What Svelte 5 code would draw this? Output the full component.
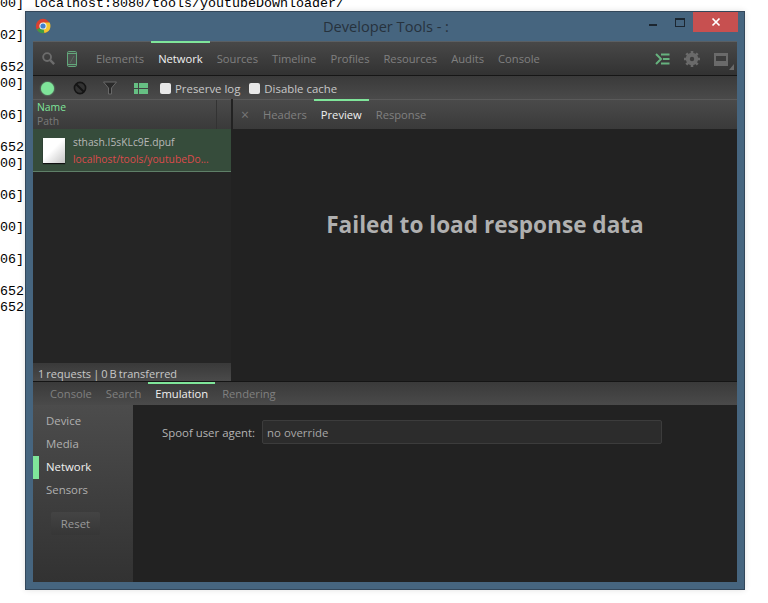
<script>
    const logLines = [
        '00] localhost:8080/tools/youtubeDownloader/', '', '02]', '', '652', '00]', '', '06]', '', '652', '00]', '', '06]', '', '00]', '', '06]', '', '652', '652'
    ];
    const mainTabs = ['Elements', 'Network', 'Sources', 'Timeline', 'Profiles', 'Resources', 'Audits', 'Console'];
    const previewTabs = ['Headers', 'Preview', 'Response'];
    const drawerTabs = ['Console', 'Search', 'Emulation', 'Rendering'];
    const sections = ['Device', 'Media', 'Network', 'Sensors'];
</script>

<div class="desktop">
    <pre class="log">{logLines.join('\n')}</pre>

    <div class="window">
        <div class="titlebar">
            <svg class="chrome" width="16" height="16" viewBox="0 0 16 16">
                <circle cx="8" cy="8" r="7.2" fill="#d9402f" />
                <path d="M8 8 L1.8 11.6 A7.2 7.2 0 0 0 9.6 15 Z" fill="#3f9b45" />
                <path d="M8 4.6 H14.6 A7.2 7.2 0 0 1 9.4 15.1 L8 8 Z" fill="#f2c531" />
                <circle cx="8" cy="8" r="3.6" fill="#eef3f7" />
                <circle cx="8" cy="8" r="2.6" fill="#3f7fd0" />
            </svg>
            <span class="title">Developer Tools - :</span>
            <div class="controls">
                <span class="min"></span>
                <span class="max"></span>
                <span class="close">
                    <svg width="10" height="10" viewBox="0 0 10 10"><path d="M1.5 1.5 L8.5 8.5 M8.5 1.5 L1.5 8.5" stroke="#fff" stroke-width="1.7" /></svg>
                </span>
            </div>
        </div>

        <div class="devtools">
            <div class="maintabs">
                <svg class="search" width="15" height="15" viewBox="0 0 16 16">
                    <circle cx="6.5" cy="6.5" r="4.2" fill="none" stroke="#6c6c6c" stroke-width="2" />
                    <path d="M9.8 9.8 L14 14" stroke="#6c6c6c" stroke-width="2.6" />
                </svg>
                <svg class="device" width="10" height="16" viewBox="0 0 10 16">
                    <rect x="0.5" y="0.5" width="9" height="15" rx="1.2" fill="#4a4f4c" stroke="#62a67a" />
                    <path d="M0.5 2.5 H9.5 M0.5 13.5 H9.5" stroke="#62a67a" />
                    <path d="M3 12 L7 5" stroke="#5a6a60" />
                </svg>
                {#each mainTabs as tab}
                    <span class="tab" class:active={tab === 'Network'}>{tab}</span>
                {/each}
                <div class="right-icons">
                    <svg width="15" height="12" viewBox="0 0 15 12">
                        <path d="M1 1 L6 6 L1 11" fill="none" stroke="#66b27e" stroke-width="2" />
                        <path d="M6 1.5 H14.5 M8 6 H14.5 M6 10.5 H14.5" stroke="#66b27e" stroke-width="2" />
                    </svg>
                    <svg class="gear" width="16" height="16" viewBox="0 0 16 16">
                        <circle cx="8" cy="8" r="4.5" fill="none" stroke="#6a6a6a" stroke-width="3.4" />
                        <path d="M8 0 V16 M0 8 H16 M2.3 2.3 L13.7 13.7 M13.7 2.3 L2.3 13.7" stroke="#6a6a6a" stroke-width="2.6" />
                        <circle cx="8" cy="8" r="2.2" fill="#3d3d3d" />
                    </svg>
                    <svg class="dock" width="20" height="17" viewBox="0 0 20 17">
                        <rect x="0" y="0" width="14" height="13" fill="#6a6a6a" />
                        <rect x="2" y="3" width="10" height="5" fill="#3c3c3c" />
                        <path d="M15 17 L20 17 L20 11 Z" fill="#6a6a6a" />
                    </svg>
                </div>
            </div>

            <div class="toolbar">
                <span class="record"></span>
                <svg class="clear" width="14" height="14" viewBox="0 0 14 14">
                    <circle cx="7" cy="7" r="5.6" fill="#333" stroke="#151515" stroke-width="1.6" />
                    <path d="M3 3 L11 11" stroke="#151515" stroke-width="2" />
                </svg>
                <svg class="filter" width="14" height="14" viewBox="0 0 14 14">
                    <path d="M0.5 1 H13.5 L8.5 7 V13 H5.5 V7 Z" fill="#2a2a2a" stroke="#686868" />
                </svg>
                <svg class="rows" width="14" height="11" viewBox="0 0 14 11">
                    <path d="M0 0 H4 V5 H0 Z M5 0 H14 V5 H5 Z M0 6 H4 V11 H0 Z M5 6 H14 V11 H5 Z" fill="#66bf83" />
                </svg>
                <label class="check"><input type="checkbox" />Preserve log</label>
                <label class="check"><input type="checkbox" />Disable cache</label>
            </div>

            <div class="split">
                <div class="requests">
                    <div class="list-head">
                        <div class="head-cell">
                            <span class="name-col">Name</span>
                            <span class="path-col">Path</span>
                        </div>
                    </div>
                    <div class="request">
                        <span class="file-icon"></span>
                        <div class="request-text">
                            <span class="file">sthash.I5sKLc9E.dpuf</span>
                            <span class="url">localhost/tools/youtubeDo...</span>
                        </div>
                    </div>
                    <div class="list-empty"></div>
                    <div class="status">1 requests | 0 B transferred</div>
                </div>
                <div class="preview">
                    <div class="preview-tabs">
                        <span class="x">×</span>
                        {#each previewTabs as tab}
                            <span class="tab" class:active={tab === 'Preview'}>{tab}</span>
                        {/each}
                    </div>
                    <div class="message">Failed to load response data</div>
                </div>
            </div>

            <div class="drawer">
                <div class="drawer-tabs">
                    {#each drawerTabs as tab}
                        <span class="tab" class:active={tab === 'Emulation'}>{tab}</span>
                    {/each}
                </div>
                <div class="drawer-body">
                    <div class="sidebar">
                        {#each sections as section}
                            <div class="section" class:selected={section === 'Network'}>{section}</div>
                        {/each}
                        <button class="reset">Reset</button>
                    </div>
                    <div class="settings">
                        <span class="spoof">Spoof user agent:</span>
                        <div class="agent">no override</div>
                    </div>
                </div>
            </div>
        </div>
    </div>
</div>

<style>
    :global(body) {
        background: #fff;
    }

    .desktop {
        position: relative;
        height: 603px;
        overflow: hidden;
        font-family: "Open Sans", "Noto Sans", sans-serif;
        font-size: 11.4px;
    }

    .log {
        margin: -4px 0 0;
        font-family: "Liberation Mono", monospace;
        font-size: 13.33px;
        line-height: 16px;
        color: #000;
    }

    .window {
        position: absolute;
        left: 25px;
        top: 11px;
        width: 720px;
        height: 579px;
        box-sizing: border-box;
        padding: 0 7px 7px;
        display: flex;
        flex-direction: column;
        background: #46657f;
        border: 1px solid #33475a;
        box-shadow: 0 0 6px rgba(0, 0, 0, 0.12);
    }

    .titlebar {
        position: relative;
        height: 29px;
        flex: none;
    }

    .chrome {
        position: absolute;
        left: 2px;
        top: 6px;
    }

    .title {
        display: block;
        padding-left: 290px;
        line-height: 29px;
        font-size: 14.6px;
        color: #26323d;
    }

    .controls {
        position: absolute;
        top: 0;
        right: -1px;
        display: flex;
        align-items: flex-start;
    }

    .min {
        width: 8px;
        height: 2px;
        margin: 12px 18px 0 0;
        background: #1c2630;
    }

    .max {
        width: 8px;
        height: 6px;
        margin: 6px 8px 0 0;
        border: 1px solid #1c2630;
        border-top-width: 2px;
    }

    .close {
        width: 45px;
        height: 20px;
        display: flex;
        align-items: center;
        justify-content: center;
        background: #c75050;
    }

    .devtools {
        flex: 1;
        min-height: 0;
        display: flex;
        flex-direction: column;
        background: #222;
        border-top: 1px solid #5a5f63;
    }

    .maintabs {
        height: 34px;
        flex: none;
        display: flex;
        align-items: center;
        box-sizing: border-box;
        padding-left: 8px;
        background: linear-gradient(#484848, #323232);
        border-bottom: 1px solid #161616;
    }

    .search {
        margin-right: 11px;
    }

    .device {
        margin-right: 12px;
    }

    .tab {
        position: relative;
        display: flex;
        align-items: center;
        align-self: stretch;
        padding: 0 7px;
        font-size: 11.2px;
        color: #808080;
    }

    .tab.active {
        color: #f0f0f0;
    }

    .tab.active::before {
        content: "";
        position: absolute;
        left: 0;
        right: 0;
        top: 0;
        height: 2px;
        background: #7fe59a;
    }

    .maintabs .tab.active::before {
        top: -1px;
    }

    .preview-tabs .tab.active::before {
        top: -1px;
    }

    .right-icons {
        margin-left: auto;
        display: flex;
        align-items: center;
        gap: 14px;
        padding-right: 3px;
    }

    .dock {
        margin-top: 6px;
    }

    .toolbar {
        height: 23px;
        flex: none;
        display: flex;
        align-items: center;
        background: linear-gradient(#3a3a3a, #4a4a4a);
        padding-left: 8px;
        padding-top: 1px;
        box-sizing: border-box;
    }

    .record {
        width: 13px;
        height: 13px;
        border-radius: 50%;
        background: #7fe59a;
        box-shadow: 0 0 2px #7fe59a;
    }

    .clear {
        margin-left: 19px;
    }

    .filter {
        margin-left: 16px;
    }

    .rows {
        margin-left: 17px;
    }

    .check {
        display: flex;
        align-items: center;
        margin-left: 9px;
        color: #c8c8c8;
    }

    .check input {
        appearance: none;
        width: 11px;
        height: 11px;
        margin: 0 4px 0 0;
        background: #e8e8e8;
        border-radius: 2px;
    }

    .rows + .check {
        margin-left: 12px;
    }

    .split {
        flex: 1;
        min-height: 0;
        display: flex;
    }

    .requests {
        width: 198px;
        flex: none;
        display: flex;
        flex-direction: column;
        margin-right: 2px;
        background: #252525;
    }

    .list-head {
        height: 30px;
        flex: none;
        box-sizing: border-box;
        background: linear-gradient(#4a4a4a, #3a3a3a);
        border-top: 1px solid #5a5a5a;
        padding-right: 14px;
    }

    .head-cell {
        height: 100%;
        display: flex;
        flex-direction: column;
        padding-left: 4px;
        box-sizing: border-box;
        line-height: 14px;
        font-size: 10.4px;
        border-right: 1px solid #333;
    }

    .name-col {
        color: #7fe59a;
    }

    .path-col {
        color: #7a7a7a;
    }

    .request {
        height: 43px;
        flex: none;
        box-sizing: border-box;
        display: flex;
        align-items: center;
        padding-left: 10px;
        background: #364c3b;
        border-bottom: 1px solid #5f7f68;
    }

    .file-icon {
        width: 22px;
        height: 25px;
        margin-right: 8px;
        background: linear-gradient(135deg, #fff 45%, #c4c4c4);
        box-shadow: 0 1px 1px #111;
    }

    .request-text {
        display: flex;
        flex-direction: column;
        gap: 3px;
        font-size: 10.3px;
        line-height: 14px;
    }

    .file {
        color: #b8b8b8;
    }

    .url {
        color: #db4b4b;
    }

    .list-empty {
        flex: 1;
        border-bottom: 1px solid #3a3a3a;
    }

    .status {
        height: 17px;
        flex: none;
        box-sizing: border-box;
        padding-left: 5px;
        line-height: 19px;
        font-size: 11px;
        word-spacing: -0.8px;
        color: #c8c8c8;
        background: linear-gradient(#3a3a3a, #4a4a4a);
    }

    .preview {
        flex: 1;
        display: flex;
        flex-direction: column;
        background: #222;
    }

    .preview-tabs {
        height: 30px;
        flex: none;
        box-sizing: border-box;
        display: flex;
        align-items: center;
        padding-left: 8px;
        background: linear-gradient(#4a4a4a, #3a3a3a);
        border-top: 1px solid #5a5a5a;
    }

    .x {
        color: #777;
        font-size: 14px;
        margin-right: 7px;
    }

    .message {
        padding-top: 80px;
        text-align: center;
        font-size: 22.6px;
        font-weight: 700;
        color: #b0b0b0;
    }

    .drawer {
        height: 201px;
        flex: none;
        display: flex;
        flex-direction: column;
        border-top: 1px solid #151515;
        box-sizing: border-box;
    }

    .drawer-tabs {
        height: 23px;
        flex: none;
        display: flex;
        padding-left: 10px;
        background: linear-gradient(#3a3a3a, #4a4a4a);
    }

    .drawer-body {
        flex: 1;
        min-height: 0;
        display: flex;
    }

    .sidebar {
        width: 100px;
        flex: none;
        display: flex;
        flex-direction: column;
        padding-top: 5px;
        background: linear-gradient(#4c4c4c, #323232);
    }

    .section {
        height: 23px;
        line-height: 22px;
        padding-left: 13px;
        color: #b0b0b0;
    }

    .section.selected {
        color: #f0f0f0;
        box-shadow: inset 6px 0 0 #7fe59a;
    }

    .reset {
        width: 49px;
        height: 23px;
        margin: 10px 0 0 18px;
        padding: 0;
        border: none;
        border-radius: 2px;
        font: inherit;
        color: #999;
        background: linear-gradient(#444, #363636);
    }

    .settings {
        flex: 1;
        display: flex;
        align-items: flex-start;
        padding: 15px 0 0 29px;
        background: #222;
    }

    .spoof {
        line-height: 26px;
        color: #b4b4b4;
    }

    .agent {
        width: 400px;
        height: 24px;
        box-sizing: border-box;
        margin-left: 7px;
        padding-left: 4px;
        line-height: 24px;
        color: #a8a8a8;
        background: #2c2c2c;
        border: 1px solid #3c3c3c;
        border-radius: 2px;
    }
</style>
